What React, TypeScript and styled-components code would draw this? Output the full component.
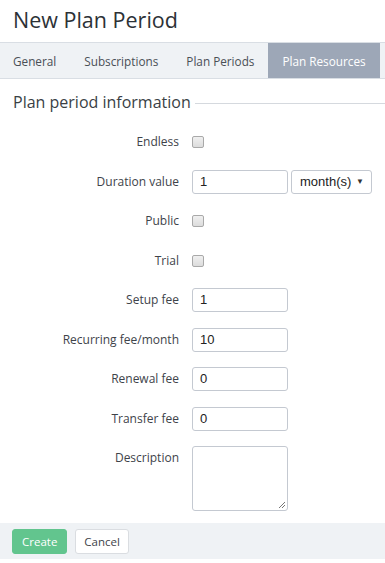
import React, { FC } from "react";
import styled, { createGlobalStyle } from "styled-components";

const GlobalStyle = createGlobalStyle`
  html, body {
    margin: 0;
    padding: 0;
    background: #ffffff;
  }
  body {
    font-family: "Open Sans", "Liberation Sans", sans-serif;
    color: #3b4046;
  }
`;

const Page = styled.div`
  width: 385px;
  height: 563px;
  overflow: hidden;
  display: flex;
  flex-direction: column;
`;

const Title = styled.h1`
  margin: 0;
  padding: 5px 0 0 13px;
  height: 37px;
  box-sizing: border-box;
  font-size: 21.5px;
  font-weight: 400;
  line-height: 30px;
  color: #2c3136;
`;

const TabBar = styled.nav`
  display: flex;
  height: 37px;
  box-sizing: border-box;
  border-top: 1px solid #d9dee4;
  border-bottom: 1px solid #d9dee4;
  background: #eff2f5;
  margin-top: 5px;
`;

const Tab = styled.div<{ active?: boolean; first?: boolean }>`
  padding: 0 14px 0 ${({ first }) => (first ? "13px" : "14px")};
  display: flex;
  align-items: center;
  font-size: 11.75px;
  color: ${({ active }) => (active ? "#ffffff" : "#4a4f56")};
  background: ${({ active }) => (active ? "#9da7b7" : "transparent")};
  white-space: nowrap;
`;

const Fieldset = styled.section`
  padding: 12px 0 0 13px;
`;

const Legend = styled.div`
  display: flex;
  align-items: center;
  gap: 4px;
  font-size: 16px;
  line-height: 22px;
  color: #3a3f45;

  &::after {
    content: "";
    flex: 1;
    height: 1px;
    background: #d5d9de;
    margin-top: 2px;
  }
`;

const Form = styled.div`
  display: flex;
  flex-direction: column;
  gap: 15.5px;
  padding-top: 17px;
`;

const Row = styled.div`
  display: grid;
  grid-template-columns: 166px auto;
  column-gap: 13px;
  align-items: start;
  min-height: 24px;
`;

const Label = styled.label`
  text-align: right;
  font-size: 12px;
  line-height: 24px;
  color: #3e434a;
  white-space: nowrap;
`;

const Field = styled.div`
  display: flex;
  align-items: center;
  min-height: 24px;
  gap: 3px;
`;

const Checkbox = styled.span`
  display: block;
  width: 10px;
  height: 10px;
  border: 1px solid #a9a9a9;
  border-radius: 2px;
  background: linear-gradient(#f0f0f0, #dcdcdc);
`;

const TextInput = styled.div`
  box-sizing: border-box;
  width: 96px;
  height: 24px;
  border: 1px solid #c4c9d1;
  border-radius: 3px;
  padding: 0 7px;
  font-family: "Liberation Sans", Arial, sans-serif;
  font-size: 13px;
  line-height: 22px;
  color: #222;
  background: #fff;
`;

const Select = styled.div`
  box-sizing: border-box;
  width: 81px;
  height: 24px;
  border: 1px solid #c4c9d1;
  border-radius: 3px;
  padding: 0 7px 0 8px;
  display: flex;
  align-items: center;
  justify-content: space-between;
  font-family: "Liberation Sans", Arial, sans-serif;
  font-size: 13px;
  color: #222;
  background: #fff;

  span:last-child {
    font-size: 8px;
    color: #333;
  }
`;

const TextArea = styled.div`
  position: relative;
  box-sizing: border-box;
  width: 96px;
  height: 65px;
  border: 1px solid #c4c9d1;
  border-radius: 3px;
  background: #fff;

  svg {
    position: absolute;
    right: 1px;
    bottom: 1px;
  }
`;

const Footer = styled.div`
  margin-top: 12px;
  height: 36px;
  background: #eff2f5;
  display: flex;
  align-items: center;
  gap: 8px;
  padding-left: 12px;
`;

const Button = styled.button<{ primary?: boolean }>`
  box-sizing: border-box;
  height: 25px;
  padding: 0 ${({ primary }) => (primary ? "9px" : "8px")};
  border-radius: 3px;
  border: 1px solid ${({ primary }) => (primary ? "#62c58e" : "#dadde1")};
  background: ${({ primary }) => (primary ? "#62c58e" : "#ffffff")};
  color: ${({ primary }) => (primary ? "#ffffff" : "#3e434a")};
  font-family: "Open Sans", "Liberation Sans", sans-serif;
  font-size: 11.5px;
  line-height: 23px;
`;

const tabs = ["General", "Subscriptions", "Plan Periods", "Plan Resources"];

const FormRow: FC<{ label: string; children: React.ReactNode }> = ({
  label,
  children,
}) => (
  <Row>
    <Label>{label}</Label>
    <Field>{children}</Field>
  </Row>
);

export default function App() {
  return (
    <Page>
      <GlobalStyle />
      <Title>New Plan Period</Title>
      <TabBar>
        {tabs.map((t, i) => (
          <Tab key={t} first={i === 0} active={t === "Plan Resources"}>
            {t}
          </Tab>
        ))}
      </TabBar>
      <Fieldset>
        <Legend>Plan period information</Legend>
        <Form>
          <FormRow label="Endless">
            <Checkbox />
          </FormRow>
          <FormRow label="Duration value">
            <TextInput>1</TextInput>
            <Select>
              <span>month(s)</span>
              <span>▼</span>
            </Select>
          </FormRow>
          <FormRow label="Public">
            <Checkbox />
          </FormRow>
          <FormRow label="Trial">
            <Checkbox />
          </FormRow>
          <FormRow label="Setup fee">
            <TextInput>1</TextInput>
          </FormRow>
          <FormRow label="Recurring fee/month">
            <TextInput>10</TextInput>
          </FormRow>
          <FormRow label="Renewal fee">
            <TextInput>0</TextInput>
          </FormRow>
          <FormRow label="Transfer fee">
            <TextInput>0</TextInput>
          </FormRow>
          <FormRow label="Description">
            <TextArea>
              <svg width="8" height="8" viewBox="0 0 8 8">
                <path d="M7 1L1 7M7 4L4 7" stroke="#777" strokeWidth="1" />
              </svg>
            </TextArea>
          </FormRow>
        </Form>
      </Fieldset>
      <Footer>
        <Button primary>Create</Button>
        <Button>Cancel</Button>
      </Footer>
    </Page>
  );
}
